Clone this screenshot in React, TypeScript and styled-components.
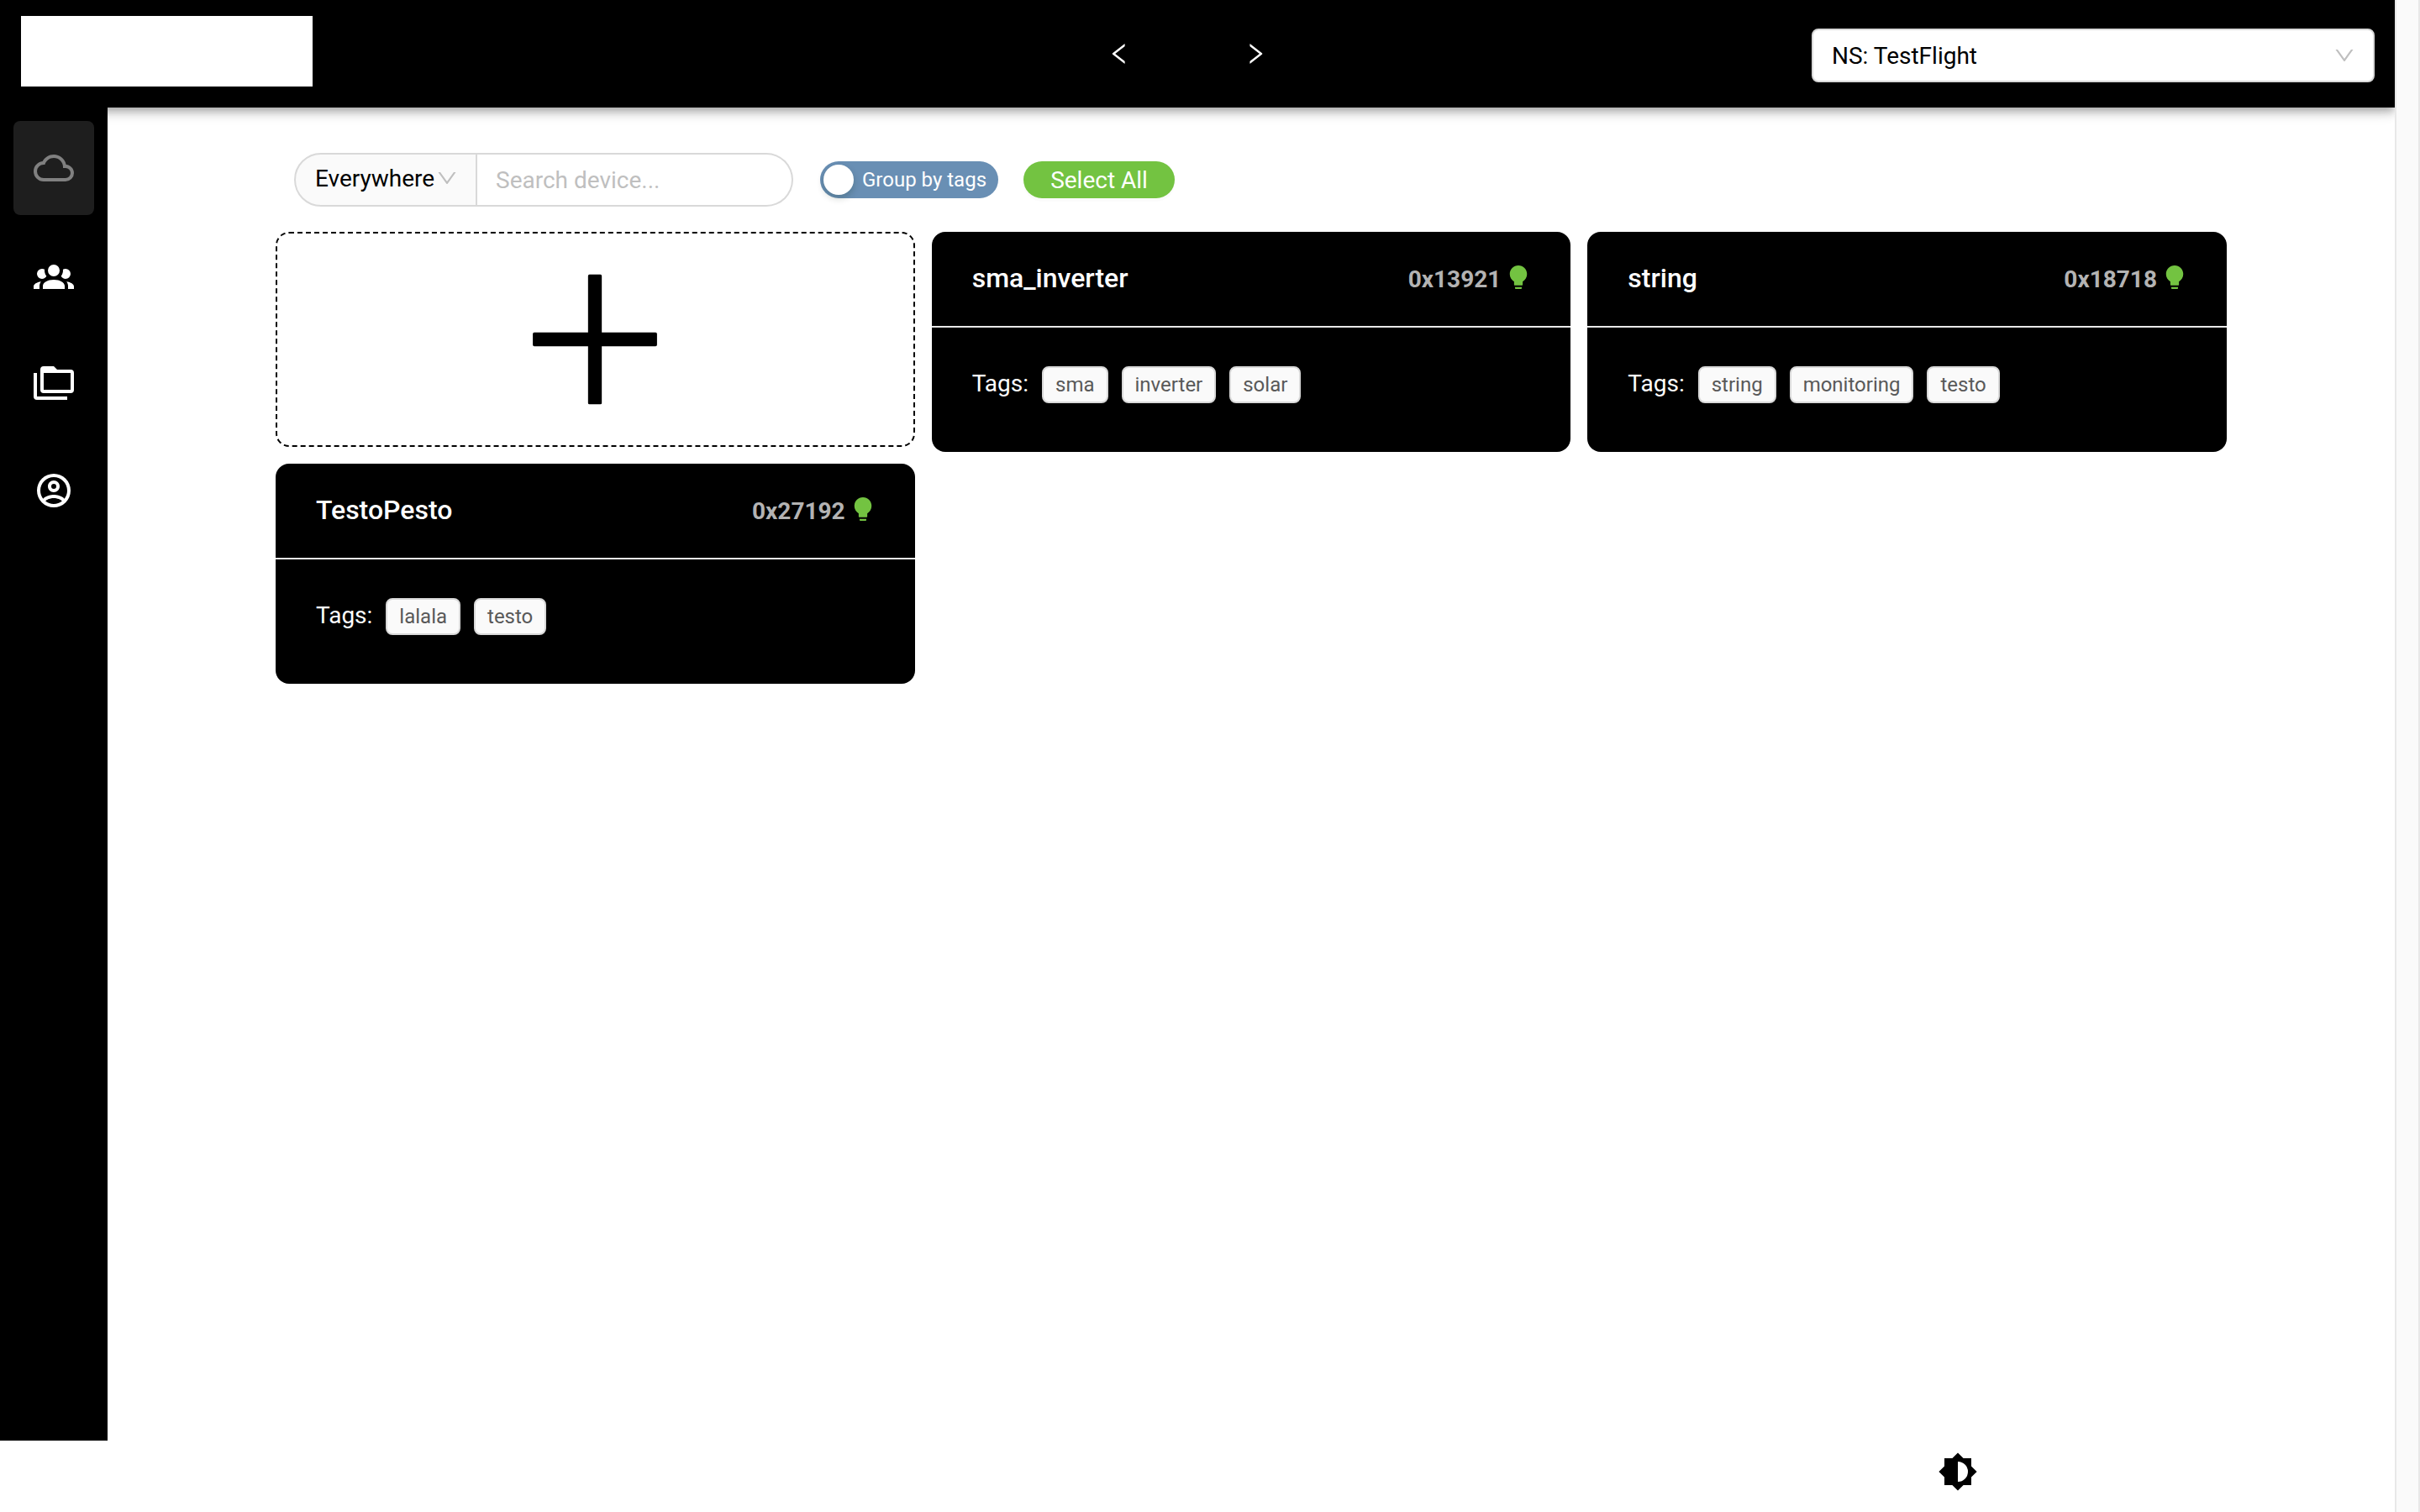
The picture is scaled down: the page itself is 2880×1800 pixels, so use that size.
import React, { useState } from "react";
import styled, { createGlobalStyle } from "styled-components";

const color = {
  ink: "#000000",
  surface: "#ffffff",
  muted: "#fafafa",
  line: "#d9d9d9",
  divider: "#e8e8e8",
  placeholder: "#bfbfbf",
  toggle: "#698fb4",
  green: "#73c341",
};

const GlobalStyle = createGlobalStyle`
  *, *::before, *::after { box-sizing: border-box; }
  body {
    margin: 0;
    background: ${color.surface};
    color: ${color.ink};
    font-family: Roboto, "Liberation Sans", sans-serif;
    font-size: 28px;
  }
  button, input, select { font: inherit; margin: 0; }
`;

/* Icons drawn on a 24 unit grid */
const path24 = {
  cloud:
    "M19,18H6A4,4 0 0,1 2,14A4,4 0 0,1 6,10H6.71C7.37,7.69 9.5,6 12,6A5.5,5.5 0 0,1 17.5,11.5V12H19A3,3 0 0,1 22,15A3,3 0 0,1 19,18M19.35,10.03C18.67,6.59 15.64,4 12,4C9.11,4 6.6,5.64 5.35,8.03C2.34,8.36 0,10.9 0,14A6,6 0 0,0 6,20H19A5,5 0 0,0 24,15C24,12.36 21.95,10.22 19.35,10.03Z",
  group:
    "M12,5.5A3.5,3.5 0 0,1 15.5,9A3.5,3.5 0 0,1 12,12.5A3.5,3.5 0 0,1 8.5,9A3.5,3.5 0 0,1 12,5.5M5,8C5.56,8 6.08,8.15 6.53,8.42C6.38,9.85 6.8,11.27 7.66,12.38C7.16,13.34 6.16,14 5,14A3,3 0 0,1 2,11A3,3 0 0,1 5,8M19,8A3,3 0 0,1 22,11A3,3 0 0,1 19,14C17.84,14 16.84,13.34 16.34,12.38C17.2,11.27 17.62,9.85 17.47,8.42C17.92,8.15 18.44,8 19,8M5.5,18.25C5.5,16.18 8.41,14.5 12,14.5C15.59,14.5 18.5,16.18 18.5,18.25V20H5.5V18.25M0,20V18.5C0,17.11 1.89,15.94 4.45,15.6C3.86,16.28 3.5,17.22 3.5,18.25V20H0M24,20H20.5V18.25C20.5,17.22 20.14,16.28 19.55,15.6C22.11,15.94 24,17.11 24,18.5V20Z",
  folders:
    "M22,4A2,2 0 0,1 24,6V16A2,2 0 0,1 22,18H6A2,2 0 0,1 4,16V4A2,2 0 0,1 6,2H12L14,4H22M2,6V20H20V22H2A2,2 0 0,1 0,20V6H2M6,6V16H22V6H6Z",
  account:
    "M12,2A10,10 0 0,0 2,12A10,10 0 0,0 12,22A10,10 0 0,0 22,12A10,10 0 0,0 12,2M7.07,18.28C7.5,17.38 10.12,16.5 12,16.5C13.88,16.5 16.5,17.38 16.93,18.28C15.57,19.36 13.86,20 12,20C10.14,20 8.43,19.36 7.07,18.28M18.36,16.83C16.93,15.09 13.46,14.5 12,14.5C10.54,14.5 7.07,15.09 5.64,16.83C4.62,15.5 4,13.82 4,12C4,7.59 7.59,4 12,4C16.41,4 20,7.59 20,12C20,13.82 19.38,15.5 18.36,16.83M12,6C10.06,6 8.5,7.56 8.5,9.5C8.5,11.44 10.06,13 12,13C13.94,13 15.5,11.44 15.5,9.5C15.5,7.56 13.94,6 12,6M12,11A1.5,1.5 0 0,1 10.5,9.5A1.5,1.5 0 0,1 12,8A1.5,1.5 0 0,1 13.5,9.5A1.5,1.5 0 0,1 12,11Z",
  brightness:
    "M12,18V6A6,6 0 0,1 18,12A6,6 0 0,1 12,18M20,15.31L23.31,12L20,8.69V4H15.31L12,0.69L8.69,4H4V8.69L0.69,12L4,15.31V20H8.69L12,23.31L15.31,20H20V15.31Z",
};

/* Icons drawn on a 1024 unit grid */
const path1024 = {
  left: "M724 218.3V141c0-6.7-7.7-10.4-12.9-6.3L260.3 486.8a31.86 31.86 0 0 0 0 50.3l450.8 352.1c5.3 4.1 12.9.4 12.9-6.3v-77.3c0-4.9-2.3-9.6-6.1-12.6l-360-281 360-281.1c3.8-3 6.1-7.7 6.1-12.6z",
  right:
    "M765.7 486.8L314.9 134.7A7.97 7.97 0 0 0 302 141v77.3c0 4.9 2.3 9.6 6.1 12.6l360 281.1-360 281.1c-3.9 3-6.1 7.7-6.1 12.6V883c0 6.7 7.7 10.4 12.9 6.3l450.8-352.1a31.96 31.96 0 0 0 0-50.4z",
  down: "M884 256h-75c-5.1 0-9.9 2.5-12.9 6.6L512 654.2 227.9 262.6c-3-4.1-7.8-6.6-12.9-6.6h-75c-6.5 0-10.3 7.4-6.5 12.7l352.6 486.1c12.8 17.6 39 17.6 51.7 0l352.6-486.1c3.9-5.3.1-12.7-6.4-12.7z",
  plus: "M482 152h60q8 0 8 8v704q0 8-8 8h-60q-8 0-8-8V160q0-8 8-8zM176 474h672q8 0 8 8v60q0 8-8 8H176q-8 0-8-8v-60q0-8 8-8z",
  bulb: "M348 676.1C250 619.4 184 513.4 184 392c0-181.1 146.9-328 328-328s328 146.9 328 328c0 121.4-66 227.4-164 284.1V792c0 17.7-14.3 32-32 32H380c-17.7 0-32-14.3-32-32V676.1zM392 888h240c4.4 0 8 3.6 8 8v32c0 17.7-14.3 32-32 32H416c-17.7 0-32-14.3-32-32v-32c0-4.4 3.6-8 8-8z",
};

const Svg = styled.svg`
  display: block;
  flex: none;
  fill: currentColor;
`;

const Icon = ({ d, size, grid = 24 }: { d: string; size: number; grid?: number }) => (
  <Svg width={size} height={size} viewBox={`0 0 ${grid} ${grid}`} aria-hidden="true">
    <path d={d} />
  </Svg>
);

const Shell = styled.div`
  display: flex;
  min-height: 100vh;
`;

const Page = styled.div`
  display: flex;
  flex: 1;
  flex-direction: column;
  min-width: 0;
`;

const ScrollTrack = styled.div`
  width: 30px;
  background: ${color.muted};
  border: solid ${color.divider};
  border-width: 0 2px;
`;

const Header = styled.header`
  display: grid;
  grid-template-columns: repeat(3, 1fr);
  align-items: center;
  height: 128px;
  padding-right: 24px;
  background: ${color.ink};
  box-shadow:
    0 4px 8px -2px rgba(0, 0, 0, 0.2),
    0 8px 10px 0 rgba(0, 0, 0, 0.14),
    0 2px 20px 0 rgba(0, 0, 0, 0.12);
`;

const Logo = styled.a`
  width: 347px;
  height: 84px;
  margin: 0 0 6px 25px;
  background: ${color.surface};
`;

const Pager = styled.nav`
  display: flex;
  justify-content: center;
  gap: 130px;
`;

const IconButton = styled.button`
  display: flex;
  padding: 0;
  border: 0;
  background: none;
  color: ${(p) => p.color ?? color.surface};
  cursor: pointer;
`;

const Field = styled.div<{ $width: number }>`
  position: relative;
  width: ${(p) => p.$width}px;
  height: 64px;
`;

const Select = styled.select`
  appearance: none;
  width: 100%;
  height: 64px;
  padding: 0 48px 0 22px;
  border: 2px solid ${color.line};
  border-radius: 8px;
  background: ${color.surface};
  color: ${color.ink};
`;

const ScopeSelect = styled(Select)`
  padding: 0 24px 4px 23px;
  border-radius: 32px 0 0 32px;
  background: ${color.muted};
`;

const Arrow = styled.span`
  position: absolute;
  top: 18px;
  right: 22px;
  color: ${color.placeholder};
  pointer-events: none;
`;

const ScopeArrow = styled(Arrow)`
  top: 16px;
`;

const Body = styled.div`
  display: flex;
  flex: 1;
`;

const Sidebar = styled.nav`
  display: flex;
  flex-direction: column;
  gap: 16px;
  width: 128px;
  padding: 16px;
  background: ${color.ink};
`;

const NavItem = styled.a<{ $active?: boolean }>`
  display: flex;
  align-items: center;
  justify-content: center;
  height: 112px;
  border-radius: 8px;
  background: ${(p) => (p.$active ? "#1e1e1e" : "transparent")};
  color: ${(p) => (p.$active ? "#808080" : color.surface)};
`;

const Main = styled.main`
  flex: 1;
  padding: 54px 200px;
`;

const Toolbar = styled.div`
  display: flex;
  align-items: center;
  padding: 0 22px;
`;

const SearchGroup = styled.div`
  display: flex;
  width: 594px;
`;

const SearchInput = styled.input`
  flex: 1;
  min-width: 0;
  height: 64px;
  padding: 0 22px;
  border: 2px solid ${color.line};
  border-left: 0;
  border-radius: 0 32px 32px 0;
  background: ${color.surface};
  &::placeholder { color: ${color.placeholder}; }
`;

const Toggle = styled.label`
  display: flex;
  align-items: center;
  gap: 10px;
  height: 44px;
  margin: 0 30px 0 32px;
  padding: 0 14px 0 4px;
  border-radius: 22px;
  background: ${color.toggle};
  color: ${color.surface};
  font-size: 24px;
  white-space: nowrap;
`;

const Knob = styled.input`
  appearance: none;
  width: 36px;
  height: 36px;
  border-radius: 50%;
  background: ${color.surface};
  box-shadow: 0 4px 8px 0 rgba(0, 35, 11, 0.2);
  &:checked { order: 1; }
`;

const SelectAll = styled.button`
  width: 180px;
  height: 44px;
  padding: 0;
  border: 0;
  border-radius: 22px;
  background: ${color.green};
  box-shadow: 0 4px 0 rgba(0, 0, 0, 0.016);
  color: ${color.surface};
  cursor: pointer;
`;

const Devices = styled.div`
  display: grid;
  grid-template-columns: repeat(3, 1fr);
  align-items: start;
  gap: 14px 20px;
  margin-top: 30px;
`;

const AddCard = styled.button`
  display: flex;
  align-items: center;
  justify-content: center;
  height: 256px;
  padding: 0;
  border: 2px dashed ${color.ink};
  border-radius: 16px;
  background: ${color.surface};
  color: ${color.ink};
  cursor: pointer;
`;

const Card = styled.article`
  border-radius: 16px;
  background: ${color.ink};
  color: ${color.surface};
`;

const CardHead = styled.header`
  display: flex;
  align-items: center;
  height: 114px;
  padding: 0 46px 0 48px;
  border-bottom: 2px solid ${color.divider};
`;

const CardTitle = styled.h2`
  flex: 1;
  margin: 0;
  padding-bottom: 2px;
  font-size: 32px;
  font-weight: 500;
`;

const DeviceId = styled.span`
  margin-right: 5px;
  color: #b3b3b3;
  font-weight: 700;
`;

const Status = styled.span`
  padding-bottom: 4px;
  color: ${color.green};
`;

const CardBody = styled.div`
  display: flex;
  align-items: baseline;
  gap: 16px;
  padding: 46px 48px 58px;
`;

const TagsLabel = styled.span`
  line-height: 40px;
`;

const Tag = styled.span`
  padding: 0 14px;
  border: 2px solid ${color.line};
  border-radius: 8px;
  background: ${color.muted};
  color: #595959;
  font-size: 24px;
  line-height: 40px;
`;

const Footer = styled.footer`
  display: flex;
  align-items: flex-end;
  justify-content: flex-end;
  height: 85px;
  padding: 0 496px 24px 0;
`;

const NamespaceField = styled(Field)`
  justify-self: end;
  margin-top: 4px;
`;

const sections = [
  { name: "Devices", icon: path24.cloud },
  { name: "Users", icon: path24.group },
  { name: "Files", icon: path24.folders },
  { name: "Account", icon: path24.account },
];

const devices = [
  { name: "sma_inverter", id: "0x13921", tags: ["sma", "inverter", "solar"] },
  { name: "string", id: "0x18718", tags: ["string", "monitoring", "testo"] },
  { name: "TestoPesto", id: "0x27192", tags: ["lalala", "testo"] },
];

const DeviceCard = ({ name, id, tags }: (typeof devices)[number]) => (
  <Card>
    <CardHead>
      <CardTitle>{name}</CardTitle>
      <DeviceId>{id}</DeviceId>
      <Status>
        <Icon d={path1024.bulb} size={32} grid={1024} />
      </Status>
    </CardHead>
    <CardBody>
      <TagsLabel>Tags:</TagsLabel>
      {tags.map((tag) => (
        <Tag key={tag}>{tag}</Tag>
      ))}
    </CardBody>
  </Card>
);

export default function App() {
  const [grouped, setGrouped] = useState(false);
  const [query, setQuery] = useState("");

  return (
    <>
      <GlobalStyle />
      <Shell>
        <Page>
          <Header>
            <Logo href="#" aria-label="Home" />
            <Pager aria-label="History">
              <IconButton type="button" aria-label="Back">
                <Icon d={path1024.left} size={32} grid={1024} />
              </IconButton>
              <IconButton type="button" aria-label="Forward">
                <Icon d={path1024.right} size={32} grid={1024} />
              </IconButton>
            </Pager>
            <NamespaceField $width={670}>
              <Select aria-label="Namespace">
                <option>NS: TestFlight</option>
              </Select>
              <Arrow>
                <Icon d={path1024.down} size={28} grid={1024} />
              </Arrow>
            </NamespaceField>
          </Header>
          <Body>
            <Sidebar aria-label="Sections">
              {sections.map((section, index) => (
                <NavItem key={section.name} href="#" aria-label={section.name} $active={index === 0}>
                  <Icon d={section.icon} size={48} />
                </NavItem>
              ))}
            </Sidebar>
            <Main>
              <Toolbar>
                <SearchGroup>
                  <Field $width={218}>
                    <ScopeSelect aria-label="Search scope">
                      <option>Everywhere</option>
                    </ScopeSelect>
                    <ScopeArrow>
                      <Icon d={path1024.down} size={28} grid={1024} />
                    </ScopeArrow>
                  </Field>
                  <SearchInput
                    type="text"
                    aria-label="Search device"
                    placeholder="Search device..."
                    value={query}
                    onChange={(event) => setQuery(event.target.value)}
                  />
                </SearchGroup>
                <Toggle>
                  <Knob
                    type="checkbox"
                    checked={grouped}
                    onChange={(event) => setGrouped(event.target.checked)}
                  />
                  Group by tags
                </Toggle>
                <SelectAll type="button">Select All</SelectAll>
              </Toolbar>
              <Devices>
                <AddCard type="button" aria-label="Add device">
                  <Icon d={path1024.plus} size={220} grid={1024} />
                </AddCard>
                {devices.map((device) => (
                  <DeviceCard key={device.id} {...device} />
                ))}
              </Devices>
            </Main>
          </Body>
          <Footer>
            <IconButton type="button" aria-label="Switch theme" color={color.ink}>
              <Icon d={path24.brightness} size={48} />
            </IconButton>
          </Footer>
        </Page>
        <ScrollTrack />
      </Shell>
    </>
  );
}
